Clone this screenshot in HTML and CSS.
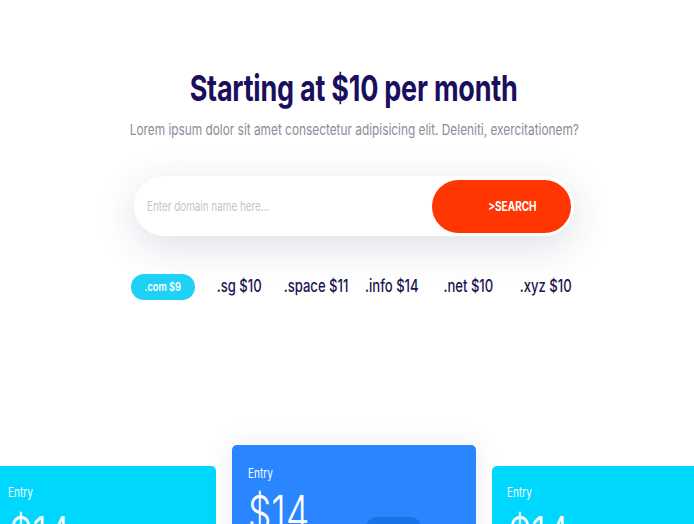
FILE: index.html
```html
<!DOCTYPE html>
<html>
<head>
<meta charset="utf-8">
<link rel="stylesheet" href="styles.css">
</head>
<body>
<main class="page">
  <section class="hero">
    <h1 class="title"><span class="sq sq-title">Starting at $10 per month</span></h1>
    <p class="lead"><span class="sq sq-lead">Lorem ipsum dolor sit amet consectetur adipisicing elit. Deleniti, exercitationem?</span></p>
    <form class="search">
      <input class="search-input" type="text" placeholder="Enter domain name here...">
      <button class="search-btn" type="button"><span class="sq">&gt;SEARCH</span></button>
    </form>
    <ul class="tlds">
      <li class="tld"><span class="tld-pill"><span class="sq">.com $9</span></span></li>
      <li class="tld"><span class="sq">.sg $10</span></li>
      <li class="tld"><span class="sq">.space $11</span></li>
      <li class="tld"><span class="sq">.info $14</span></li>
      <li class="tld"><span class="sq">.net $10</span></li>
      <li class="tld"><span class="sq">.xyz $10</span></li>
    </ul>
  </section>
  <section class="plans">
    <div class="plan plan-side">
      <div class="plan-name"><span class="sq sq-left">Entry</span></div>
      <div class="plan-price"><span class="sq sq-left">$14</span></div>
    </div>
    <div class="plan plan-main">
      <div class="plan-name"><span class="sq sq-left">Entry</span></div>
      <div class="plan-row">
        <div class="plan-price"><span class="sq sq-left">$14<span class="per">/mo</span></span></div>
        <span class="plan-tag"></span>
      </div>
    </div>
    <div class="plan plan-side">
      <div class="plan-name"><span class="sq sq-left">Entry</span></div>
      <div class="plan-price"><span class="sq sq-left">$14</span></div>
    </div>
  </section>
</main>
</body>
</html>
```
FILE: styles.css
```css
* { box-sizing: border-box; }
html, body { margin: 0; padding: 0; background: #fff; overflow: hidden; }
body { font-family: Inter, "Noto Sans", sans-serif; }
.sq { display: inline-block; transform: scaleX(0.77); transform-origin: center; white-space: nowrap; }
.sq-left { transform-origin: left center; }
.sq-title { transform: scaleX(0.75); }
.sq-lead { transform: scaleX(0.79); }
.page { padding-left: 14px; width: 694px; height: 524px; overflow: hidden; }
.hero { display: flex; flex-direction: column; align-items: center; padding-top: 64px; }
.title { margin: 0; font-size: 36px; font-weight: 700; color: #1a0f5c; letter-spacing: -0.3px; line-height: 48px; white-space: nowrap; }
.lead { margin: 8px 0 0; font-size: 15px; color: #8b8b99; line-height: 20px; white-space: nowrap; }
.search { margin-top: 36px; width: 440px; height: 60px; background: #fff; border-radius: 30px; box-shadow: 0 10px 40px rgba(30, 40, 80, 0.15); display: flex; align-items: center; justify-content: space-between; padding: 3px 3px 3px 13px; }
.search-input { width: 285px; border: 0; outline: 0; padding: 0; font: 13px Inter, sans-serif; color: #333; background: transparent; transform: scaleX(0.76); transform-origin: left center; }
.search-input::placeholder { color: #c4c4cf; }
.search-btn { width: 139px; height: 53px; border: 0; border-radius: 27px; background: #ff3502; color: #fff; font: 700 13px Inter, sans-serif; padding: 0 0 0 22px; }
.tlds { list-style: none; margin: 36px 0 0; padding: 0; display: grid; grid-template-columns: repeat(6, 76.5px); align-items: center; }
.tld { text-align: center; font-size: 17px; font-weight: 500; color: #1a1450; line-height: 26px; }
.tld:nth-child(3) { margin-left: -4px; }
.tld-pill { display: inline-flex; align-items: center; justify-content: center; width: 64px; height: 26px; border-radius: 13px; background: #1fd1f5; color: #fff; font-size: 12px; font-weight: 600; }
.plans { margin-top: 145px; display: flex; justify-content: center; align-items: flex-start; gap: 16px; }
.plan { height: 130px; border-radius: 5px; padding: 18px 16px; color: #fff; }
.plan-side { flex: 0 0 223px; margin-top: 21px; background: #00d7ff; }
.plan-main { flex: 0 0 244px; padding-top: 20px; background: #2a86ff; box-shadow: 0 0 30px rgba(0, 0, 0, 0.08); }
.plan-name { font-size: 13px; line-height: 16px; }
.plan-side .plan-name { margin-left: -1px; }
.plan-price { margin-top: 6px; font-size: 48px; font-weight: 300; line-height: 56px; }
.plan-main .plan-price { margin-top: 4px; }
.per { font-size: 12px; vertical-align: -4px; }
.plan-row { display: flex; align-items: flex-start; }
.plan-tag { display: block; margin-left: 17px; margin-top: 36px; width: 55px; height: 20px; border-radius: 10px; background: #1a72ea; }
```
